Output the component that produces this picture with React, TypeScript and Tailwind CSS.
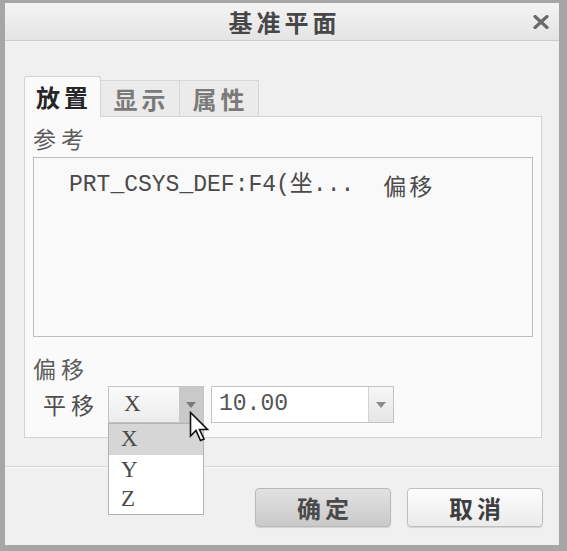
import React from 'react';

const cjk = { fontFamily: '"Noto Sans CJK SC", "Noto Sans", sans-serif' };
const mono = { fontFamily: '"Liberation Mono", "Noto Sans CJK SC", monospace' };
const serif = { fontFamily: '"Liberation Serif", serif' };

const Caret = ({ color }: { color: string }) => (
  <svg width="10" height="6" viewBox="0 0 10 6">
    <path d="M0 0 H10 L5 6 Z" fill={color} />
  </svg>
);

const Cursor = () => (
  <svg width="22" height="32" viewBox="0 0 22 32" className="absolute left-[81px] top-[25px] z-30">
    <path
      d="M1.5 1.5 V25 L7 19.5 L11.5 29.5 L15 28 L10.5 18.5 H18.5 Z"
      fill="#ffffff"
      stroke="#111111"
      strokeWidth="1.6"
      strokeLinejoin="miter"
    />
  </svg>
);

const App = () => {
  return (
    <div
      className="flex flex-col w-[567px] h-[551px] bg-[#f0f0f0] border-l-[5px] border-t-[3px] border-r-[8px] border-b-[6px] border-[#a6a6a6]"
      style={cjk}
    >
      {/* title bar */}
      <div className="grid grid-cols-[1fr_auto_1fr] items-center h-[38px] border-b border-[#cdcdcd] bg-gradient-to-b from-[#f4f4f4] to-[#e4e4e4]">
        <div />
        <div className="text-[24px] font-bold tracking-[4px] text-[#474747] leading-none pl-[5px]">基准平面</div>
        <div className="flex justify-end pr-[10px]">
          <svg width="16" height="14" viewBox="0 0 16 14">
            <path d="M2 1.5 L14 12.5 M14 1.5 L2 12.5" stroke="#6a6a6a" strokeWidth="3.2" strokeLinecap="round" />
          </svg>
        </div>
      </div>

      {/* body */}
      <div className="h-[425px] pt-[35px] pl-[19px] pr-[17px]">
        <div className="flex items-end h-[40px]">
          <div className="relative z-10 -mb-px w-[77px] h-[41px] flex items-center justify-center border border-b-0 border-[#d2d2d2] bg-[#fafafa] rounded-t-[3px] text-[24px] font-bold tracking-[4px] text-[#262626] pl-[3px]">
            放置
          </div>
          <div className="w-[79px] h-[36px] flex items-center justify-center border border-l-0 border-b-0 border-[#d6d6d6] bg-[#ebebeb] text-[24px] font-bold tracking-[4px] text-[#7a7a7a] pl-[3px]">
            显示
          </div>
          <div className="w-[79px] h-[36px] flex items-center justify-center border border-l-0 border-b-0 border-[#d6d6d6] bg-[#ebebeb] text-[24px] font-bold tracking-[4px] text-[#7a7a7a] pl-[3px]">
            属性
          </div>
        </div>

        <div className="h-[322px] border border-[#d2d2d2] bg-[#fafafa] px-[8px] pt-[9px]">
          <div className="text-[23px] leading-[24px] tracking-[5px] text-[#5c5c5c]">参考</div>
          <div className="mt-[7px] h-[180px] border border-[#bdbdbd] bg-[#f9f9f9] pl-[35px] pt-[13px]">
            <div className="flex items-center text-[23px] leading-[28px] text-[#4a4a4a]" style={mono}>
              <span>PRT_CSYS_DEF:F4(坐...</span>
              <span className="ml-[29px] tracking-[3px]" style={cjk}>偏移</span>
            </div>
          </div>

          <div className="mt-[19px] text-[23px] leading-[24px] tracking-[5px] text-[#5c5c5c]">偏移</div>

          <div className="mt-[6px] flex items-center">
            <div className="ml-[10px] w-[65px] text-[23px] tracking-[5px] text-[#4e4e4e]">平移</div>

            <div className="relative">
              <div className="flex w-[96px] h-[37px] border border-[#c4c4c4] bg-gradient-to-b from-[#fbfbfb] to-[#ececec]">
                <div className="flex-1 flex items-center pl-[15px] text-[23px] text-[#4a4a4a]" style={serif}>X</div>
                <div className="w-[24px] flex items-center justify-center bg-[#c9c9c9]">
                  <Caret color="#7a7a7a" />
                </div>
              </div>
              <div className="absolute left-0 top-full z-20 w-[96px] border border-[#b3b3b3] bg-white text-[23px] text-[#4a4a4a]" style={serif}>
                <div className="h-[31px] flex items-center pl-[12px] bg-[#d6d6d6]">X</div>
                <div className="h-[30px] flex items-center pl-[12px]">Y</div>
                <div className="h-[29px] flex items-center pl-[12px]">Z</div>
              </div>
              <Cursor />
            </div>

            <div className="ml-[7px] flex w-[183px] h-[37px] border border-[#c4c4c4] bg-white">
              <div className="flex-1 flex items-center pl-[7px] text-[23px] text-[#555555]" style={mono}>10.00</div>
              <div className="w-[25px] flex items-center justify-center border-l border-[#d4d4d4] bg-gradient-to-b from-[#f6f6f6] to-[#e6e6e6]">
                <Caret color="#8a8a8a" />
              </div>
            </div>
          </div>
        </div>
      </div>

      {/* separator */}
      <div className="h-[2px] border-t border-[#d6d6d6] bg-[#fbfbfb]" />

      {/* footer */}
      <div className="flex-1 flex justify-end items-start gap-[16px] pt-[20px] pr-[16px]">
        <button className="w-[136px] h-[39px] rounded-[4px] border border-[#b9b9b9] bg-gradient-to-b from-[#e2e2e2] to-[#c9c9c9] text-[24px] font-bold tracking-[4px] text-[#4a4a4a] pl-[4px] shadow-[0_1px_1px_rgba(0,0,0,0.12)]">
          确定
        </button>
        <button className="w-[136px] h-[39px] rounded-[4px] border border-[#bfbfbf] bg-gradient-to-b from-[#fdfdfd] to-[#ebebeb] text-[24px] font-bold tracking-[4px] text-[#3e3e3e] pl-[4px] shadow-[0_1px_1px_rgba(0,0,0,0.12)]">
          取消
        </button>
      </div>
    </div>
  );
};

export default App;
